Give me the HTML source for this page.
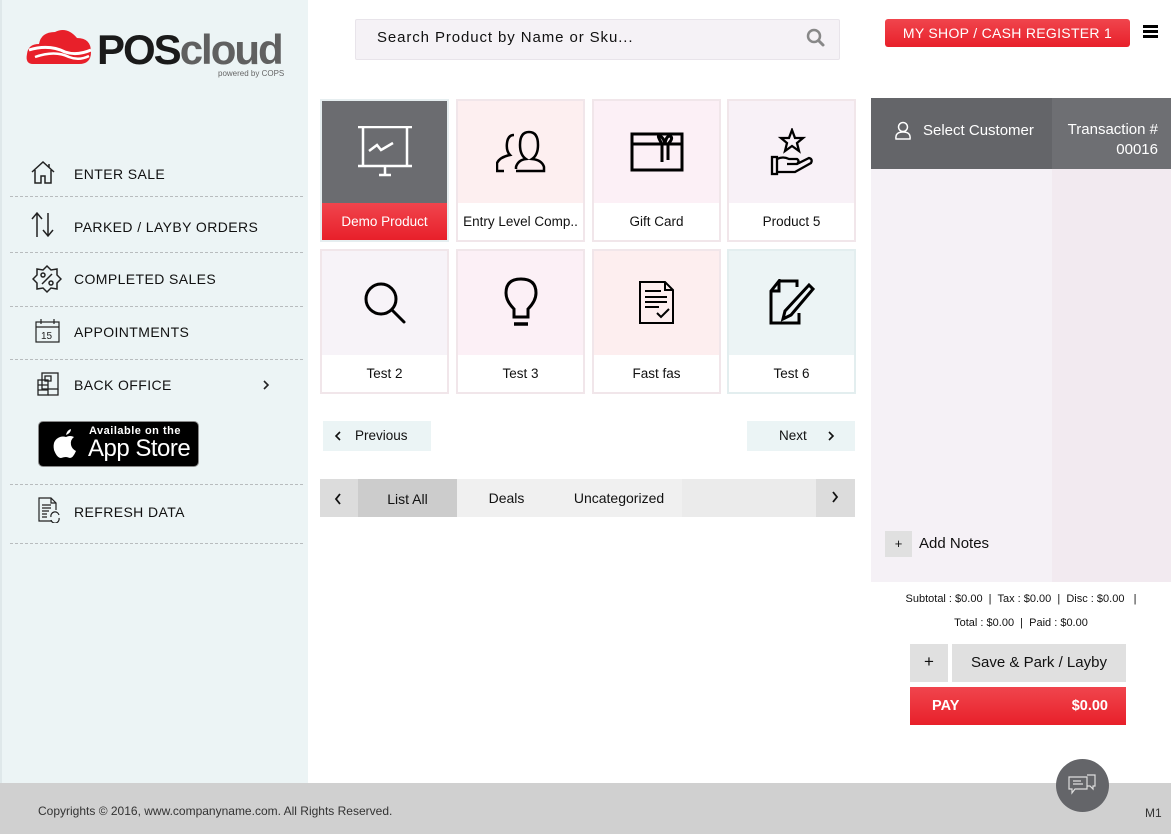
<!DOCTYPE html>
<html><head><meta charset="utf-8"><style>
*{box-sizing:border-box;margin:0;padding:0}
body{width:1171px;height:834px;overflow:hidden;position:relative;background:#fff;font-family:"Liberation Sans",sans-serif;color:#111}
.abs{position:absolute}
#side{left:0;top:0;width:308px;height:783px;background:#ecf4f5;box-shadow:inset 2px 0 0 #dfe8ea}
.mi{position:absolute;left:74px;font-size:14px;letter-spacing:.4px;color:#111}
.sep{position:absolute;left:10px;width:293px;border-top:1px dashed #b8bcbe}
.ico{position:absolute;left:30px}
.tile{position:absolute;width:129px;border:2px solid #f1e6ea}
.tile .ic{height:102px;display:flex;align-items:center;justify-content:center}
.tile .lb{height:37px;background:#fff;font-size:13.5px;display:flex;align-items:center;justify-content:center;white-space:nowrap;overflow:hidden}
#foot{left:0;top:783px;width:1171px;height:51px;background:#d0d0d0;font-size:12px;color:#333}
</style></head><body>
<div id="side" class="abs">
 <svg class="abs" style="left:25px;top:24px" width="70" height="44" viewBox="0 0 70 44"><path d="M8 40 Q0 40 2 30 Q3 20 14 20 Q16 8 30 8 Q42 2 52 14 Q66 14 66 28 Q66 40 54 40 Z" fill="#e8202a"/><path d="M4 26 Q24 20 40 28 Q52 32 66 26" stroke="#fff" stroke-width="3" fill="none"/><path d="M10 33 Q30 26 44 33 Q54 37 64 32" stroke="#fff" stroke-width="2.5" fill="none"/></svg>
 <div class="abs" style="left:97px;top:29px;font-size:42px;font-weight:bold;letter-spacing:-2px;line-height:42px"><span style="color:#1a1a1a">POS</span><span style="color:#606060">cloud</span></div>
 <div class="abs" style="left:218px;top:69px;font-size:8px;color:#666">powered by COPS</div>
 <svg class="ico" style="top:160px" width="26" height="26" viewBox="0 0 26 26" fill="none" stroke="#222" stroke-width="1.5"><path d="M2 12 L13 2 L24 12 M5 10 V23 H11 V16 H15 V23 H21 V10 M19 4 V7"/></svg>
 <div class="mi" style="top:166px">ENTER SALE</div>
 <div class="sep" style="top:196px"></div>
 <svg class="ico" style="top:211px" width="28" height="28" viewBox="0 0 28 28" fill="none" stroke="#222" stroke-width="1.5"><path d="M7 26 V3 M2 8 L7 2 L12 8 M18 2 V25 M13 19 L18 25 L23 19"/></svg>
 <div class="mi" style="top:219px">PARKED / LAYBY ORDERS</div>
 <div class="sep" style="top:252px"></div>
 <svg class="ico" style="top:264px;left:32px" width="30" height="30" viewBox="0 0 30 30" fill="none" stroke="#222" stroke-width="1.5"><path d="M15 2 L19 6 L25 5 L25 11 L29 15 L25 19 L25 25 L19 24 L15 28 L11 24 L5 25 L5 19 L1 15 L5 11 L5 5 L11 6 Z M10 20 L20 10"/><circle cx="11" cy="11" r="2"/><circle cx="19" cy="19" r="2"/></svg>
 <div class="mi" style="top:271px">COMPLETED SALES</div>
 <div class="sep" style="top:306px"></div>
 <svg class="ico" style="top:318px;left:35px" width="26" height="26" viewBox="0 0 26 26" fill="none" stroke="#222" stroke-width="1.2"><rect x="1" y="4" width="23" height="20"/><path d="M1 9 H24 M6 1 V6 M19 1 V6"/><text x="6" y="21" font-size="10" fill="#222" stroke="none" font-family="Liberation Sans">15</text></svg>
 <div class="mi" style="top:324px">APPOINTMENTS</div>
 <div class="sep" style="top:359px"></div>
 <svg class="ico" style="top:372px;left:37px" width="24" height="24" viewBox="0 0 24 24" fill="none" stroke="#222" stroke-width="1.3"><rect x="5" y="1" width="16" height="16"/><rect x="1" y="8" width="10" height="15"/><rect x="8" y="4" width="6" height="5"/><path d="M1 13 H11 M1 18 H11 M11 23 H21 V17"/></svg>
 <div class="mi" style="top:377px">BACK OFFICE</div>
 <svg class="abs" style="left:261px;top:379px" width="10" height="12" viewBox="0 0 10 12"><path d="M3 2 L7 6 L3 10" stroke="#222" stroke-width="1.6" fill="none"/></svg>
 <div class="abs" style="left:38px;top:421px;width:161px;height:46px;background:#000;border-radius:5px;border:1px solid #888"></div>
 <svg class="abs" style="left:52px;top:428px" width="28" height="32" viewBox="0 0 28 32"><path d="M14 9 Q18 7 22 9 Q18 12 19 17 Q20 21 24 23 Q21 30 18 30 Q15 29 14 29 Q12 29 9 30 Q5 30 2 22 Q0 12 8 9 Q11 8 14 9Z M14 7 Q15 2 19 1 Q19 5 14 7Z" fill="#fff"/></svg>
 <div class="abs" style="left:89px;top:425px;font-size:11px;color:#fff;font-weight:bold;letter-spacing:.5px">Available on the</div>
 <div class="abs" style="left:88px;top:435px;font-size:24px;color:#fff;letter-spacing:-.5px">App Store</div>
 <div class="sep" style="top:484px"></div>
 <svg class="ico" style="top:497px;left:37px" width="26" height="26" viewBox="0 0 26 26" fill="none" stroke="#222" stroke-width="1.2"><path d="M15 24 H2 V1 H14 L19 6 V13 M14 1 V6 H19 M5 8 H14 M5 11 H14 M5 14 H12 M5 17 H10 M5 20 H10"/><path d="M14 20 A4 4 0 0 1 22 18 M22 21 A4 4 0 0 1 14 23"/></svg>
 <div class="mi" style="top:504px">REFRESH DATA</div>
 <div class="sep" style="top:543px"></div>
</div>

<div class="abs" style="left:355px;top:19px;width:485px;height:41px;background:#f5f2f6;border:1px solid #e8e4ea;border-radius:2px"></div>
<div class="abs" style="left:377px;top:29px;font-size:15px;letter-spacing:.9px;color:#111">Search Product by Name or Sku...</div>
<svg class="abs" style="left:806px;top:28px" width="20" height="20" viewBox="0 0 20 20"><circle cx="8" cy="8" r="6" stroke="#888" stroke-width="2.5" fill="none"/><path d="M12.5 12.5 L17 17" stroke="#888" stroke-width="3" stroke-linecap="round"/></svg>

<div class="abs" style="left:885px;top:19px;width:245px;height:28px;background:linear-gradient(#f0454d,#e8202a);border-radius:3px;color:#fff;font-size:14px;letter-spacing:.3px;text-align:center;line-height:28px">MY SHOP / CASH REGISTER 1</div>
<div class="abs" style="left:1143px;top:25px;width:15px;height:3px;background:#000;box-shadow:0 5px 0 #000,0 10px 0 #000"></div>

<div class="tile" style="left:320px;top:99px;border-color:#e6eef0"><div class="ic" style="background:#6b6c70"><svg width="56" height="52" viewBox="0 0 56 52" fill="none" stroke="#fff" stroke-width="2.5"><path d="M1 1 H55 M1 40 H55 M6 1 V40 M50 1 V40 M28 40 V48 M22 49 H34"/><path d="M12 25 L20 19 L24 24 L36 17" /></svg></div><div class="lb" style="background:linear-gradient(#f0454d,#e8202a);color:#fff">Demo Product</div></div>
<div class="tile" style="left:456px;top:99px"><div class="ic" style="background:#fdeff0"><svg width="50" height="46" viewBox="0 0 50 46" fill="none" stroke="#000" stroke-width="2.5"><path d="M18 6 Q12 6 11 14 Q10 22 14 26 Q4 28 1 34 V42 H8 M20 40 V38 Q22 31 30 30 Q24 26 24 16 Q24 3 33 3 Q42 3 42 16 Q42 26 36 30 Q46 31 48 38 V42 H20"/></svg></div><div class="lb">Entry Level Comp..</div></div>
<div class="tile" style="left:592px;top:99px"><div class="ic" style="background:#fcf0f6"><svg width="54" height="40" viewBox="0 0 54 40" fill="none" stroke="#000" stroke-width="3"><rect x="2" y="2" width="50" height="36"/><path d="M2 12 H52 M32 12 V30 M38 12 V28 M32 12 Q26 2 30 4 Q34 6 35 12 Q36 4 40 4 Q44 6 38 12"/></svg></div><div class="lb">Gift Card</div></div>
<div class="tile" style="left:727px;top:99px"><div class="ic" style="background:#f8f1f7"><svg width="46" height="48" viewBox="0 0 46 48" fill="none" stroke="#000" stroke-width="2.3"><path d="M23 2 L26 10 L34 10 L28 15 L30 23 L23 18 L16 23 L18 15 L12 10 L20 10 Z"/><rect x="3" y="29" width="5" height="17"/><path d="M8 31 Q14 28 20 31 H28 Q31 33 28 36 H18 M8 44 H26 L42 35 Q44 31 40 30 L28 36"/></svg></div><div class="lb">Product 5</div></div>

<div class="tile" style="left:320px;top:249px"><div class="ic" style="background:#f7f3f8;height:104px"><svg width="44" height="44" viewBox="0 0 44 44" fill="none" stroke="#000" stroke-width="3"><circle cx="18" cy="18" r="15"/><path d="M29 29 L41 41" stroke-linecap="round"/></svg></div><div class="lb">Test 2</div></div>
<div class="tile" style="left:456px;top:249px"><div class="ic" style="background:#fcf0f6;height:104px"><svg width="34" height="52" viewBox="0 0 34 52" fill="none" stroke="#000" stroke-width="3"><path d="M10 40 V32 Q2 24 2 16 Q2 2 17 2 Q32 2 32 16 Q32 24 24 32 V40 Z"/><path d="M10 47 H24" stroke-width="3.5"/></svg></div><div class="lb">Test 3</div></div>
<div class="tile" style="left:592px;top:249px"><div class="ic" style="background:#fdeeef;height:104px"><svg width="36" height="44" viewBox="0 0 36 44" fill="none" stroke="#000" stroke-width="2"><path d="M1 1 H26 L34 9 V42 H1 Z M26 1 V9 H34 M6 10 H22 M6 16 H28 M6 21 H28 M6 26 H20 M18 32 L22 36 L30 28"/></svg></div><div class="lb">Fast fas</div></div>
<div class="tile" style="left:727px;top:249px;border-color:#e3eeef"><div class="ic" style="background:#ecf4f5;height:104px"><svg width="46" height="48" viewBox="0 0 46 48" fill="none" stroke="#000" stroke-width="3"><path d="M10 2 H28 V8 M30 34 V44 H2 V12 L10 2 V12 H2"/><path d="M40 6 L44 10 L22 36 L14 40 L16 32 Z"/></svg></div><div class="lb">Test 6</div></div>

<div class="abs" style="left:323px;top:421px;width:108px;height:30px;background:#ebf4f5;font-size:13.5px;line-height:30px;padding-left:32px">Previous</div>
<svg class="abs" style="left:333px;top:430px" width="10" height="12"><path d="M7 2 L3 6 L7 10" stroke="#111" stroke-width="1.6" fill="none"/></svg>
<div class="abs" style="left:747px;top:421px;width:108px;height:30px;background:#ebf4f5;font-size:13.5px;line-height:30px;padding-left:32px">Next</div>
<svg class="abs" style="left:826px;top:430px" width="10" height="12"><path d="M3 2 L7 6 L3 10" stroke="#111" stroke-width="1.6" fill="none"/></svg>

<div class="abs" style="left:320px;top:479px;width:535px;height:38px;background:#ebebeb;font-size:14px;line-height:38px">
 <div class="abs" style="left:0;width:38px;height:38px;background:#dcdcdc"></div>
 <div class="abs" style="left:38px;width:99px;height:38px;background:#cccccc;text-align:center;line-height:40px">List All</div>
 <div class="abs" style="left:137px;width:99px;height:38px;background:#f0f0f0;text-align:center">Deals</div>
 <div class="abs" style="left:236px;width:126px;height:38px;background:#f0f0f0;text-align:center">Uncategorized</div>
 <div class="abs" style="left:496px;width:39px;height:38px;background:#dcdcdc"></div>
</div>
<svg class="abs" style="left:333px;top:492px" width="10" height="14"><path d="M7 2 L3 7 L7 12" stroke="#111" stroke-width="1.8" fill="none"/></svg>
<svg class="abs" style="left:830px;top:490px" width="10" height="14"><path d="M3 2 L7 7 L3 12" stroke="#111" stroke-width="1.8" fill="none"/></svg>

<div class="abs" style="left:871px;top:98px;width:181px;height:71px;background:#646569"></div>
<div class="abs" style="left:1052px;top:98px;width:119px;height:71px;background:#6e6f73"></div>
<svg class="abs" style="left:894px;top:121px" width="18" height="20" viewBox="0 0 18 20" fill="none" stroke="#fff" stroke-width="1.5"><circle cx="9" cy="6" r="4.5"/><path d="M2 18 Q1 11 9 11 Q17 11 16 18 Z"/></svg>
<div class="abs" style="left:923px;top:122px;font-size:15px;color:#fff">Select Customer</div>
<div class="abs" style="left:1052px;top:120px;width:106px;text-align:right;font-size:15px;color:#fff;line-height:20px">Transaction #<br>00016</div>
<div class="abs" style="left:871px;top:169px;width:181px;height:413px;background:#f5f1f6"></div>
<div class="abs" style="left:1052px;top:169px;width:119px;height:413px;background:#f2eaf0"></div>
<div class="abs" style="left:885px;top:531px;width:27px;height:26px;background:#e0e0e0;text-align:center;line-height:25px;font-size:13px">+</div>
<div class="abs" style="left:919px;top:535px;font-size:15px">Add Notes</div>
<div class="abs" style="left:871px;top:593px;width:300px;text-align:center;font-size:11px;white-space:pre">Subtotal : $0.00  |  Tax : $0.00  |  Disc : $0.00   |</div>
<div class="abs" style="left:871px;top:617px;width:300px;text-align:center;font-size:11px;white-space:pre">Total : $0.00  |  Paid : $0.00</div>
<div class="abs" style="left:910px;top:644px;width:38px;height:38px;background:#e0e0e0;text-align:center;line-height:36px;font-size:17px">+</div>
<div class="abs" style="left:952px;top:644px;width:174px;height:38px;background:#e0e0e0;text-align:center;line-height:38px;font-size:15px">Save &amp; Park / Layby</div>
<div class="abs" style="left:910px;top:687px;width:216px;height:38px;background:linear-gradient(#f0454d,#e8202a);color:#fff;font-weight:bold;font-size:14.5px;line-height:38px;padding:0 18px 0 22px"><span>PAY</span><span style="float:right">$0.00</span></div>

<div id="foot" class="abs"><div class="abs" style="left:38px;top:21px">Copyrights © 2016, www.companyname.com. All Rights Reserved.</div><div class="abs" style="left:1145px;top:23px">M1</div></div>
<div class="abs" style="left:1056px;top:759px;width:53px;height:53px;border-radius:50%;background:#646569"></div>
<svg class="abs" style="left:1067px;top:771px" width="30" height="30" viewBox="0 0 30 30" fill="none" stroke="#ddd" stroke-width="1.2"><path d="M2 6 H20 V18 H8 L5 22 V18 H2 Z M20 4 H28 V15 H26 V18 L23 15 H20 M6 10 H14 M6 13 H16"/></svg>
</body></html>
